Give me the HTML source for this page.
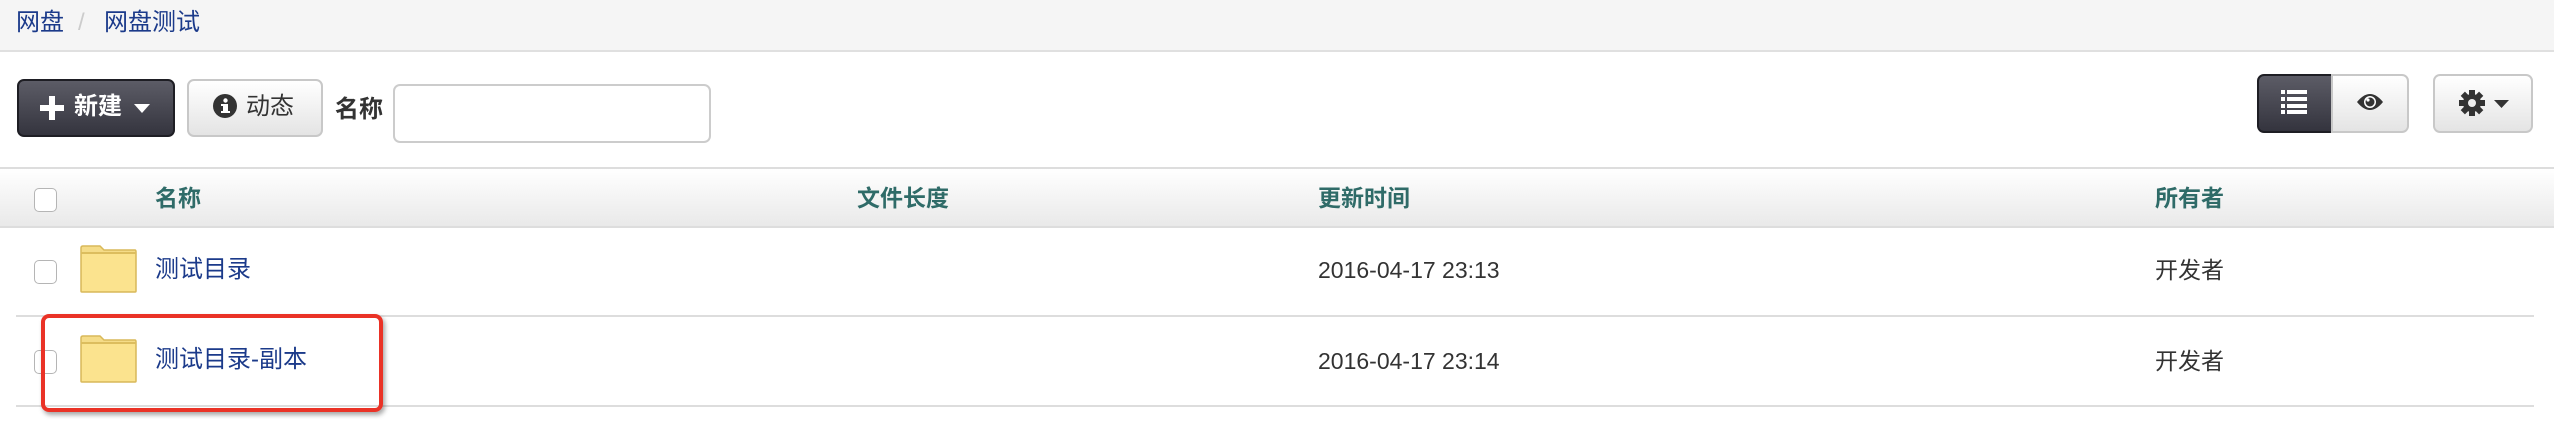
<!DOCTYPE html>
<html><head><meta charset="utf-8"><style>
*{box-sizing:border-box;margin:0;padding:0}
body{width:2554px;height:436px;background:#fff;font-family:"Liberation Sans","Noto Sans CJK SC",sans-serif;position:relative;overflow:hidden;color:#333}
.a{position:absolute}
.bc{left:0;top:0;width:2554px;height:52px;background:#f5f5f5;border-bottom:2px solid #e0e0e0}
.t{position:absolute;font-size:23px;line-height:30px;white-space:nowrap}
.blue{color:#1b3a8a}
.hd{color:#2f6b68;font-weight:bold}
.btn{position:absolute;border-radius:7px;border:2px solid #c8c8c8;background:linear-gradient(#fff,#e4e4e4)}
.cb{position:absolute;width:23px;height:24px;border:1.5px solid #b5b5b5;border-radius:5px;background:#fff}
.line{position:absolute;height:2px;background:#ddd}
</style></head><body>
<div class="a bc"></div>
<div class="t blue" style="left:16px;top:8px;font-size:24px">网盘</div>
<div class="t" style="left:78px;top:8px;color:#ccc;font-size:24px">/</div>
<div class="t blue" style="left:104px;top:8px;font-size:24px">网盘测试</div>

<div class="btn" style="left:17px;top:79px;width:158px;height:58px;background:linear-gradient(#5c5c66,#34343e);border-color:#1e1e24"></div>
<svg class="a" style="left:40px;top:96px" width="24" height="24"><rect x="9" y="0" width="6" height="24" fill="#fff"/><rect x="0" y="9" width="24" height="6" fill="#fff"/></svg>
<div class="t" style="left:74px;top:92px;color:#fff;font-weight:bold;font-size:24px">新建</div>
<svg class="a" style="left:134px;top:104px" width="16" height="9"><path d="M0 0H16L8 9Z" fill="#fff"/></svg>

<div class="btn" style="left:187px;top:79px;width:136px;height:58px"></div>
<svg class="a" style="left:212px;top:93px" width="26" height="26"><circle cx="13" cy="13" r="12" fill="#333"/><rect x="11" y="11" width="5" height="9" fill="#fff"/><rect x="9" y="11" width="4" height="2" fill="#fff"/><rect x="9" y="18" width="9" height="2" fill="#fff"/><circle cx="13.5" cy="7.5" r="2.2" fill="#fff"/></svg>
<div class="t" style="left:246px;top:92px;font-size:24px">动态</div>
<div class="t" style="left:335px;top:95px;font-weight:bold;font-size:24px">名称</div>
<div class="a" style="left:393px;top:84px;width:318px;height:59px;border:2px solid #ccc;border-radius:7px"></div>

<div class="btn" style="left:2257px;top:74px;width:76px;height:59px;border-radius:7px 0 0 7px;background:linear-gradient(#5c5c66,#34343e);border-color:#1e1e24"></div>
<svg class="a" style="left:2281px;top:90px" width="28" height="24" fill="#fff"><rect x="0" y="0" width="4" height="4"/><rect x="6" y="0" width="20" height="4"/><rect x="0" y="7" width="4" height="4"/><rect x="6" y="7" width="20" height="4"/><rect x="0" y="14" width="4" height="4"/><rect x="6" y="14" width="20" height="4"/><rect x="0" y="20" width="4" height="4"/><rect x="6" y="20" width="20" height="4"/></svg>
<div class="btn" style="left:2331px;top:74px;width:78px;height:59px;border-radius:0 7px 7px 0"></div>
<svg class="a" style="left:2356px;top:92px" width="28" height="20"><path d="M1 10Q14 -6 27 10Q14 26 1 10Z" fill="#333"/><circle cx="14" cy="10" r="6" fill="#fff"/><circle cx="14" cy="10" r="4.5" fill="#333"/><circle cx="12" cy="8" r="1.6" fill="#fff"/></svg>
<div class="btn" style="left:2433px;top:74px;width:100px;height:59px"></div>
<svg class="a" style="left:2459px;top:90px" width="26" height="26"><g fill="#333" transform="translate(13 13)"><rect x="-3" y="-13" width="6" height="26"/><rect x="-3" y="-13" width="6" height="26" transform="rotate(45)"/><rect x="-3" y="-13" width="6" height="26" transform="rotate(90)"/><rect x="-3" y="-13" width="6" height="26" transform="rotate(135)"/><circle r="9"/></g><circle cx="13" cy="13" r="4" fill="#eee"/></svg>
<svg class="a" style="left:2494px;top:100px" width="15" height="8"><path d="M0 0H15L7.5 8Z" fill="#333"/></svg>

<div class="a" style="left:0;top:167px;width:2554px;height:61px;background:linear-gradient(#fff,#e9e9e9);border-top:2px solid #ddd;border-bottom:2px solid #ddd"></div>
<div class="cb" style="left:34px;top:188px"></div>
<div class="t hd" style="left:155px;top:183px">名称</div>
<div class="t hd" style="left:857px;top:183px">文件长度</div>
<div class="t hd" style="left:1318px;top:183px">更新时间</div>
<div class="t hd" style="left:2155px;top:183px">所有者</div>

<div class="cb" style="left:34px;top:260px"></div>
<svg class="a" style="left:80px;top:245px" width="57" height="48"><path d="M1 3Q1 1 3 1H20L24 5H55Q56 5 56 7V46Q56 47 55 47H2Q1 47 1 46Z" fill="#f5dc88" stroke="#d9b95a" stroke-width="1.5"/><path d="M1 8H56" stroke="#dcbd5e" stroke-width="2"/><rect x="2" y="9" width="53" height="37" fill="#fbe38e"/></svg>
<div class="t blue" style="left:155px;top:255px;font-size:24px">测试目录</div>
<div class="t" style="left:1318px;top:255px">2016-04-17 23:13</div>
<div class="t" style="left:2155px;top:255px">开发者</div>
<div class="line" style="left:16px;top:315px;width:2518px"></div>

<div class="cb" style="left:34px;top:350px"></div>
<svg class="a" style="left:80px;top:335px" width="57" height="48"><path d="M1 3Q1 1 3 1H20L24 5H55Q56 5 56 7V46Q56 47 55 47H2Q1 47 1 46Z" fill="#f5dc88" stroke="#d9b95a" stroke-width="1.5"/><path d="M1 8H56" stroke="#dcbd5e" stroke-width="2"/><rect x="2" y="9" width="53" height="37" fill="#fbe38e"/></svg>
<div class="t blue" style="left:155px;top:345px;font-size:24px">测试目录-副本</div>
<div class="t" style="left:1318px;top:346px">2016-04-17 23:14</div>
<div class="t" style="left:2155px;top:346px">开发者</div>
<div class="line" style="left:16px;top:405px;width:2518px"></div>

<div class="a" style="left:41px;top:314px;width:342px;height:98px;border:4px solid #ea3226;border-radius:8px;box-shadow:2px 3px 5px rgba(0,0,0,.35)"></div>
</body></html>
